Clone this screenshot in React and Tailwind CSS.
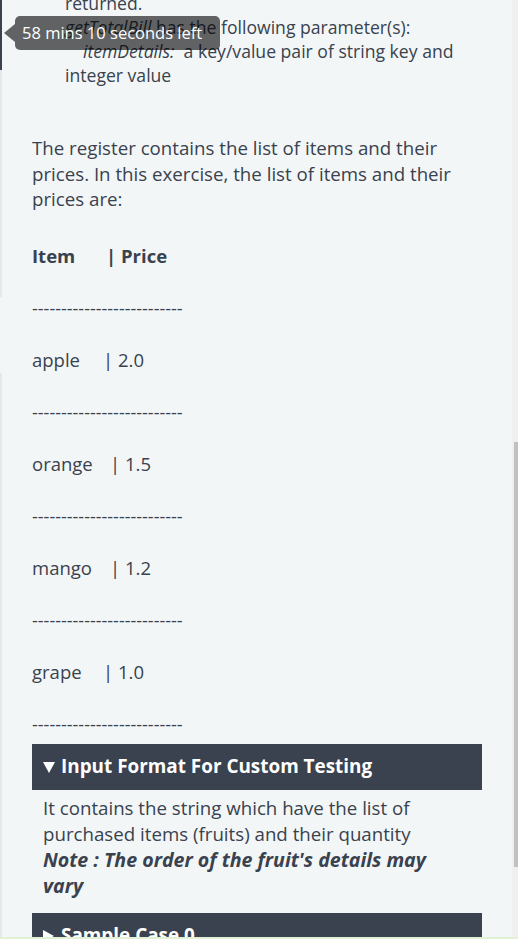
import React from "react";

const font = { fontFamily: '"Open Sans", "Noto Sans", sans-serif' };

function Row({ name, w, price }) {
  return (
    <p className="mb-[26px] leading-[26px]">
      <span className="inline-block" style={{ width: w }}>{name}</span>| {price}
    </p>
  );
}

function Dashes() {
  return <p className="mb-[26px] leading-[26px] text-[18px]">--------------------------</p>;
}

export default function App() {
  return (
    <div className="relative h-[939px] w-[518px] overflow-hidden flex bg-[#f3f6f7]" style={font}>
      {/* left strip */}
      <div className="w-[2px] flex flex-col shrink-0">
        <div className="h-[70px] bg-[#39424e]" />
        <div className="h-[227px] bg-[#e6e8e9]" />
        <div className="h-[76px] bg-[#f3f6f7]" />
        <div className="flex-1 bg-[#e6e8e9]" />
      </div>

      {/* content */}
      <div className="flex-1 overflow-hidden text-[18.7px] text-[#39424e] pl-[30px] pr-[30px]">
        <div className="mt-[-9px] pl-[33px] leading-[24px] text-[17.6px]">
          <p>returned.</p>
          <p>
            <i>getTotalBill</i> has the following parameter(s):
          </p>
          <p className="pl-[18px] whitespace-pre">
            <i>itemDetails:</i>{"  a key/value pair of string key and"}
          </p>
          <p>integer value</p>
        </div>

        <p className="mt-[48px] leading-[25.5px] pr-[10px]">
          The register contains the list of items and their prices. In this exercise, the list of items and their prices are:
        </p>

        <div className="mt-[31px] text-[18.5px]">
          <p className="mb-[26px] leading-[26px] font-bold">
            <span className="inline-block w-[74px]">Item</span>| Price
          </p>
          <Dashes />
          <Row name="apple" w="71px" price="2.0" />
          <Dashes />
          <Row name="orange" w="78px" price="1.5" />
          <Dashes />
          <Row name="mango" w="78px" price="1.2" />
          <Dashes />
          <Row name="grape" w="71px" price="1.0" />
          <p className="leading-[26px] text-[18px]">--------------------------</p>
        </div>

        <div className="mt-[7px] h-[46px] bg-[#39424e] text-white font-bold text-[18.9px] flex items-center pl-[11px]">
          <svg width="12" height="11" viewBox="0 0 12 11" className="mr-[6px] mt-[1px]">
            <polygon points="0,0 12,0 6,11" fill="#ffffff" />
          </svg>
          Input Format For Custom Testing
        </div>
        <div className="pl-[11px] pr-[20px] pt-[5px] leading-[26px]">
          <p>It contains the string which have the list of purchased items (fruits) and their quantity</p>
          <p className="font-bold italic text-[19.6px] leading-[26px]">Note : The order of the fruit's details may vary</p>
        </div>
        <div className="mt-[14px] h-[46px] bg-[#39424e] text-white font-bold text-[18.9px] flex items-center pl-[11px]">
          <svg width="11" height="12" viewBox="0 0 11 12" className="mr-[7px] mt-[1px]">
            <polygon points="0,0 11,6 0,12" fill="#ffffff" />
          </svg>
          Sample Case 0
        </div>
      </div>

      {/* scrollbar */}
      <div className="w-[6px] shrink-0 bg-[#f0f0f0] flex flex-col">
        <div className="h-[442px]" />
        <div className="h-[425px] ml-[2px] bg-[#c1c1c1]" />
      </div>

      {/* bottom green line */}
      <div className="absolute left-0 right-0 bottom-0 h-[2px] bg-[#e2f0d6]" />

      {/* tooltip */}
      <div className="absolute left-[4px] top-[16px] flex items-center">
        <div className="w-0 h-0 border-y-[9px] border-y-transparent border-r-[11px] border-r-black/60" />
        <div className="h-[34px] w-[205px] rounded-[5px] bg-black/60 text-white text-[16.5px] flex items-center pl-[7px] whitespace-nowrap">
          58 mins 10 seconds left
        </div>
      </div>
    </div>
  );
}
